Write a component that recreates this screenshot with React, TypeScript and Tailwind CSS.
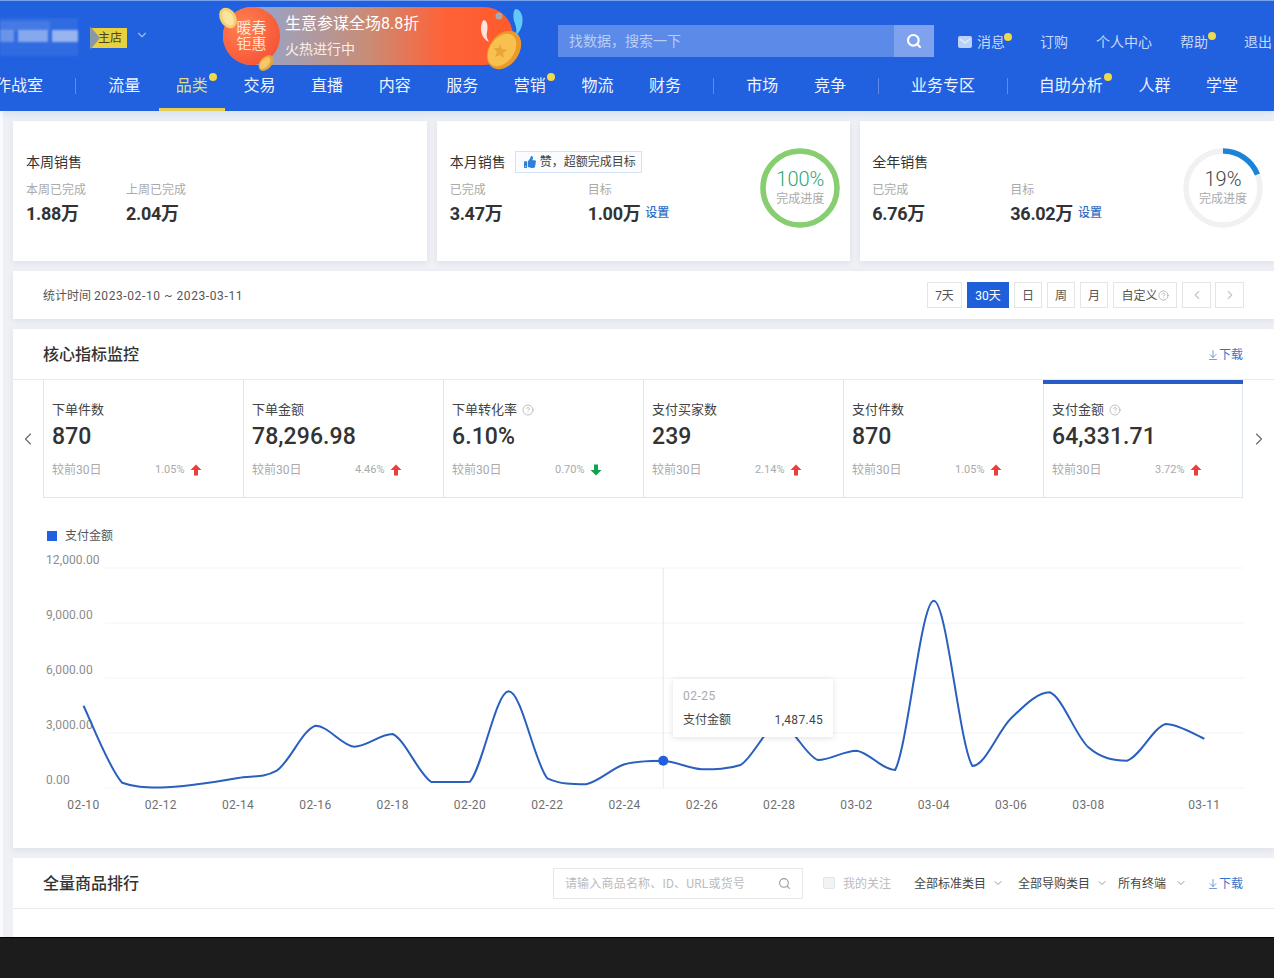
import { ArrowDownToLine, ChevronDown, ChevronLeft, ChevronRight, CircleHelp, Search } from "lucide-react";
import { FaThumbsUp } from "react-icons/fa";

const navA = ["流量", "品类", "交易", "直播", "内容", "服务", "营销", "物流", "财务"];
const navDots = ["品类", "营销", "自助分析"];

const metrics = [
  { title: "下单件数", value: "870", pct: "1.05%", up: true },
  { title: "下单金额", value: "78,296.98", pct: "4.46%", up: true },
  { title: "下单转化率", value: "6.10%", pct: "0.70%", up: false, help: true },
  { title: "支付买家数", value: "239", pct: "2.14%", up: true },
  { title: "支付件数", value: "870", pct: "1.05%", up: true },
  { title: "支付金额", value: "64,331.71", pct: "3.72%", up: true, help: true, active: true },
];

const ranges = [
  { label: "7天", w: "w-[35px]" },
  { label: "30天", w: "w-[42px]", active: true },
  { label: "日", w: "w-[28px]" },
  { label: "周", w: "w-[28px]" },
  { label: "月", w: "w-[28px]" },
];

// y pixel of each day, read from the picture
const ys = [
  705.7, 782.7, 787.5, 784, 778, 770.7, 725.7, 746.7, 734, 782, 781.7, 691.3, 778.3, 784.3, 764.3, 760.7, 769.3, 765, 724,
  760, 750.7, 770, 600.7, 766, 718.3, 692.3, 747.3, 760.7, 724, 738.7,
];
const dayX = (i: number) => 83.5 + i * 38.65;

const clamp = (v: number, a: number, b: number) => Math.min(Math.max(a, b), Math.max(Math.min(a, b), v));

const linePath = () => {
  const pts = ys.map((y, i) => [dayX(i), y]);
  let d = `M${pts[0][0]} ${pts[0][1]}`;
  for (let i = 0; i < pts.length - 1; i++) {
    const p0 = pts[Math.max(i - 1, 0)];
    const p1 = pts[i];
    const p2 = pts[i + 1];
    const p3 = pts[Math.min(i + 2, pts.length - 1)];
    const c1x = p1[0] + (p2[0] - p0[0]) / 6;
    const c1y = clamp(p1[1] + (p2[1] - p0[1]) / 6, p1[1], p2[1]);
    const c2x = p2[0] - (p3[0] - p1[0]) / 6;
    const c2y = clamp(p2[1] - (p3[1] - p1[1]) / 6, p1[1], p2[1]);
    d += ` C${c1x} ${c1y} ${c2x} ${c2y} ${p2[0]} ${p2[1]}`;
  }
  return d;
};

const xLabels = [
  { i: 0, t: "02-10" },
  { i: 2, t: "02-12" },
  { i: 4, t: "02-14" },
  { i: 6, t: "02-16" },
  { i: 8, t: "02-18" },
  { i: 10, t: "02-20" },
  { i: 12, t: "02-22" },
  { i: 14, t: "02-24" },
  { i: 16, t: "02-26" },
  { i: 18, t: "02-28" },
  { i: 20, t: "03-02" },
  { i: 22, t: "03-04" },
  { i: 24, t: "03-06" },
  { i: 26, t: "03-08" },
  { i: 29, t: "03-11" },
];

const yLabels = [
  { y: 568, t: "12,000.00" },
  { y: 623, t: "9,000.00" },
  { y: 678, t: "6,000.00" },
  { y: 733, t: "3,000.00" },
  { y: 788, t: "0.00" },
];

const Dot = ({ className }: { className: string }) => (
  <span className={`absolute h-[8px] w-[8px] rounded-full bg-[#eed84c] ${className}`} />
);

const NavItem = ({ label, active }: { label: string; active?: boolean }) => (
  <div className={`relative flex h-full items-center pb-[5px] ${active ? "text-[#dcdf86]" : "text-[#eef3ff]"}`}>
    {label}
    {navDots.includes(label) && <Dot className="-right-[9px] top-[8px]" />}
    {active && <span className="absolute -left-[17px] -right-[17px] bottom-0 h-[3px] bg-[#e6cf55]" />}
  </div>
);

const NavSep = ({ className = "-mx-[3.5px]" }: { className?: string }) => (
  <span className={`mb-[5px] h-[16px] w-px bg-[#5d8be6] ${className}`} />
);

const Download = () => (
  <span className="flex items-center pt-px text-[12px] text-[#3a74c9]">
    <ArrowDownToLine size={12} strokeWidth={1.4} />
    下载
  </span>
);

const Ring = ({ pct, color, textColor }: { pct: number; color: string; textColor: string }) => {
  const len = 2 * Math.PI * 37;
  return (
    <div className="relative flex h-[80px] w-[80px] shrink-0 flex-col items-center justify-center pb-[3px]">
      <svg className="absolute inset-0" width="80" height="80" viewBox="0 0 80 80">
        <circle cx="40" cy="40" r="37" fill="none" stroke="#f0f1f2" strokeWidth="5.5" />
        <circle
          cx="40"
          cy="40"
          r="37"
          fill="none"
          stroke={color}
          strokeWidth="5.5"
          strokeDasharray={`${(len * pct) / 100} ${len}`}
          transform="rotate(-90 40 40)"
        />
      </svg>
      <span className={`text-[20px] leading-[24px] font-light ${textColor}`}>{pct}%</span>
      <span className="text-[12px] leading-[16px] text-[#aaaaaa]">完成进度</span>
    </div>
  );
};

const Stat = ({ label, value, link, w }: { label: string; value: string; link?: boolean; w: string }) => (
  <div className={w}>
    <div className="h-[20px] text-[12px] leading-[22px] text-[#aaaaaa]">{label}</div>
    <div className="flex h-[28px] items-center text-[18px] font-bold tracking-[-0.3px] text-[#333333]">
      {value}
      {link && <span className="ml-[5px] text-[12px] font-medium tracking-normal text-[#2f6fc4]">设置</span>}
    </div>
  </div>
);

const UpArrow = () => (
  <svg width="12" height="12" viewBox="0 0 12 12">
    <path d="M6 .5 11.5 6H8v5.5H4V6H.5z" fill="#e5423d" />
  </svg>
);

const DownArrow = () => (
  <svg width="12" height="12" viewBox="0 0 12 12">
    <path d="M6 11.5.5 6H4V.5h4V6h3.5z" fill="#12a150" />
  </svg>
);

const App = () => {
  return (
    <div className="flex h-[978px] w-[1274px] flex-col overflow-hidden bg-[#eef0f5] font-[Roboto,'Noto_Sans_CJK_SC',sans-serif] text-[#333333]">
      {/* top bar */}
      <header className="relative z-10 h-[111px] shrink-0 border-t border-[#7aa3ee] bg-[#2160df] shadow-[0_3px_8px_rgba(33,96,223,0.12)]">
        <div className="flex h-[64px] items-start">
          <svg className="mt-[17px] shrink-0 blur-[1px]" width="90" height="38" viewBox="0 0 90 38">
            <rect x="0" y="0" width="78" height="38" fill="#fff" opacity=".07" />
            <rect x="0" y="3" width="50" height="10" fill="#fff" opacity=".1" />
            <rect x="0" y="12" width="14" height="12" fill="#fff" opacity=".28" />
            <rect x="18" y="12" width="30" height="12" fill="#fff" opacity=".42" />
            <rect x="52" y="12" width="26" height="12" fill="#fff" opacity=".5" />
          </svg>
          <div className="relative mt-[27px] flex h-[20px] w-[37px] shrink-0 items-center justify-end bg-[#e8d13f] pr-[5px] text-[12px] text-[#4a4220]">
            主店
            <svg className="absolute left-0 top-[-2px]" width="10" height="24" viewBox="0 0 10 24">
              <path d="M0 0 10 12 0 24z" fill="#6f8bc0" opacity=".8" />
            </svg>
          </div>
          <ChevronDown className="mt-[27px] ml-[8px] text-[#9fbdf5]" size={14} />
          {/* promo banner */}
          <div className="relative mt-[6px] ml-[74px] flex h-[58px] w-[290px] shrink-0 rounded-full bg-[linear-gradient(90deg,#9aa3c2_15%,#c98c76_50%,#ff6238_76%,#ff5a2c)]">
            <div className="flex h-[58px] w-[57px] shrink-0 flex-col items-center justify-center rounded-full bg-[radial-gradient(circle_at_35%_35%,#ff8254,#f5472c)] text-[15px] leading-[16px] text-[#ffe6d8]">
              <span>暖春</span>
              <span>钜惠</span>
            </div>
            <div className="ml-[5px] flex flex-col pt-[5px] text-white">
              <span className="text-[16px] leading-[24px]">生意参谋全场8.8折</span>
              <span className="mt-[3px] text-[14px] leading-[20px] text-[#fbeee8]">火热进行中</span>
            </div>
            <svg className="absolute -left-[13px] -top-[6px] overflow-visible" width="320" height="70" viewBox="210 0 320 70">
              <ellipse cx="228" cy="17" rx="8" ry="11" transform="rotate(-30 228 17)" fill="#f6cf70" />
              <ellipse cx="228" cy="17" rx="5" ry="8" transform="rotate(-30 228 17)" fill="#fbe3a0" />
              <ellipse cx="266" cy="62" rx="6" ry="9" transform="rotate(40 266 62)" fill="#e8a23a" />
              <ellipse cx="265" cy="62" rx="4" ry="7" transform="rotate(40 265 62)" fill="#f6c769" />
              <ellipse cx="504" cy="49" rx="15" ry="21" transform="rotate(35 504 49)" fill="#eb9a2a" />
              <ellipse cx="502" cy="49" rx="12" ry="18" transform="rotate(35 502 49)" fill="#f8c04f" />
              <path d="M500 43l2 5 5 1-4 3 1 5-4-3-5 2 2-5-3-4 5 0z" fill="#e8a53a" />
              <path d="M484 19c4 1 4 8 3 12-1 3 0 7 2 10-5-2-8-8-8-13 0-4 1-8 3-9z" fill="#ffe3dc" />
              <path d="M516 8c5 0 8 9 6 16-1 4-3 8-6 10 1-6 0-9-2-14-1-5-1-11 2-12z" fill="#63c9f6" />
              <circle cx="499" cy="15" r="3.5" fill="#a9a9a9" />
            </svg>
          </div>
          {/* search */}
          <div className="mt-[24px] ml-[45px] flex h-[32px] w-[376px] shrink-0 bg-[#5b8ae8]">
            <div className="flex-1 pl-[11px] text-[14px] leading-[32px] text-[#b9cdf6]">找数据，搜索一下</div>
            <div className="flex w-[40px] items-center justify-center bg-[#7ea2ee]">
              <Search className="text-white" size={16} strokeWidth={3.2} />
            </div>
          </div>
          {/* links */}
          <div className="mt-[24px] flex h-[34px] items-center whitespace-nowrap text-[14px] text-[#c8d9fa]">
            <svg className="ml-[24px]" width="14" height="12" viewBox="0 0 14 12">
              <rect width="14" height="12" rx="2" fill="#bcd0f8" />
              <path d="M2 3l5 4 5-4" fill="none" stroke="#e6eeff" strokeWidth="1.2" />
            </svg>
            <span className="relative ml-[5px]">
              消息
              <Dot className="-right-[7px] top-[1px]" />
            </span>
            <span className="ml-[35px]">订购</span>
            <span className="ml-[28px]">个人中心</span>
            <span className="relative ml-[28px]">
              帮助
              <Dot className="-right-[8px] top-[0px]" />
            </span>
            <span className="ml-[36px]">退出</span>
          </div>
        </div>
        <nav className="-ml-[5px] flex h-[46px] items-center gap-[35.6px] whitespace-nowrap text-[16px]">
          <NavItem label="作战室" />
          <NavSep />
          {navA.map((item) => (
            <NavItem key={item} label={item} active={item === "品类"} />
          ))}
          <NavSep />
          <NavItem label="市场" />
          <NavItem label="竞争" />
          <NavSep />
          <NavItem label="业务专区" />
          <NavSep className="-ml-[3.5px] -mr-[5px]" />
          <NavItem label="自助分析" />
          <NavItem label="人群" />
          <NavItem label="学堂" />
        </nav>
      </header>

      {/* page */}
      <main className="flex min-h-0 flex-1 flex-col gap-[10px] overflow-hidden border-l-[3px] border-[#fafbfe] pt-[10px] pl-[10px]">
        <div className="grid shrink-0 grid-cols-3 gap-[10px]">
          <div className="h-[140px] bg-white pt-[30px] pl-[13px] shadow-[0_2px_6px_rgba(30,50,90,0.08)]">
            <div className="flex h-[22px] items-center text-[14px]">本周销售</div>
            <div className="mt-[6px] flex">
              <Stat label="本周已完成" value="1.88万" w="w-[100px]" />
              <Stat label="上周已完成" value="2.04万" w="w-[100px]" />
            </div>
          </div>
          <div className="flex h-[140px] justify-between bg-white pt-[30px] pr-[10px] pl-[13px] shadow-[0_2px_6px_rgba(30,50,90,0.08)]">
            <div>
              <div className="flex h-[22px] items-center text-[14px]">
                本月销售
                <span className="ml-[9px] flex h-[22px] w-[127px] items-center gap-[4px] border border-[#d3e2f6] bg-[#fafcff] pl-[8px] text-[12px] text-[#444444]">
                  <FaThumbsUp className="text-[#2f80d8]" size={12} />
                  赞，超额完成目标
                </span>
              </div>
              <div className="mt-[6px] flex">
                <Stat label="已完成" value="3.47万" w="w-[138px]" />
                <Stat label="目标" value="1.00万" link w="w-[100px]" />
              </div>
            </div>
            <div className="-mt-[3px]">
              <Ring pct={100} color="#87ce70" textColor="text-[#2ba678]" />
            </div>
          </div>
          <div className="flex h-[140px] justify-between bg-white pt-[30px] pr-[11px] pl-[12px] shadow-[0_2px_6px_rgba(30,50,90,0.08)]">
            <div>
              <div className="flex h-[22px] items-center text-[14px]">全年销售</div>
              <div className="mt-[6px] flex">
                <Stat label="已完成" value="6.76万" w="w-[138px]" />
                <Stat label="目标" value="36.02万" link w="w-[120px]" />
              </div>
            </div>
            <div className="-mt-[3px]">
              <Ring pct={19} color="#1c84d8" textColor="text-[#444444]" />
            </div>
          </div>
        </div>

        {/* date bar */}
        <div className="flex h-[48px] shrink-0 items-center justify-between bg-white pr-[30px] pl-[30px] shadow-[0_2px_6px_rgba(30,50,90,0.08)]">
          <span className="pt-px text-[12px] text-[#555555]">
            统计时间 <span className="tracking-[0.6px]">2023-02-10 ~ 2023-03-11</span>
          </span>
          <div className="flex gap-[5px] text-[12px]">
            {ranges.map((r) => (
              <span
                key={r.label}
                className={`flex h-[26px] items-center justify-center border pt-px ${r.w} ${
                  r.active ? "border-[#1f5fd9] bg-[#1f5fd9] text-white" : "border-[#e3e5e8] text-[#555555]"
                }`}
              >
                {r.label}
              </span>
            ))}
            <span className="flex h-[26px] w-[64px] items-center justify-center border border-[#e3e5e8] pt-px text-[#555555]">
              自定义
              <CircleHelp className="text-[#999999]" size={11} strokeWidth={1.4} />
            </span>
            <span className="flex h-[26px] w-[29px] items-center justify-center border border-[#e3e5e8] text-[#c4c6ca]">
              <ChevronLeft size={14} />
            </span>
            <span className="-ml-[1px] flex h-[26px] w-[29px] items-center justify-center border border-[#e3e5e8] text-[#c4c6ca]">
              <ChevronRight size={14} />
            </span>
          </div>
        </div>

        {/* core metrics */}
        <section className="shrink-0 bg-white pb-[28px] shadow-[0_2px_6px_rgba(30,50,90,0.08)]">
          <div className="flex h-[51px] items-center justify-between border-b border-[#e8eaee] pr-[31px] pl-[30px]">
            <h2 className="pt-px text-[16px] font-medium text-[#333333]">核心指标监控</h2>
            <Download />
          </div>
          <div className="flex h-[118px]">
            <div className="flex w-[30px] items-center justify-center text-[#666666]">
              <ChevronLeft size={20} strokeWidth={1.3} />
            </div>
            <div className="flex w-[1200px] border-b border-l border-[#e2e6ea]">
              {metrics.map((m) => (
                <div
                  key={m.title}
                  className="relative w-[200px] border-r border-[#dde6ee] pt-[20px] pl-[8px] last:w-[199px]"
                >
                  {m.active && <span className="absolute -left-px -right-px top-0 h-[4px] bg-[#2a5cc8]" />}
                  <div className="flex h-[20px] items-center gap-[5px] text-[13px] text-[#444444]">
                    {m.title}
                    {m.help && <CircleHelp className="text-[#a5a5a5]" size={12} strokeWidth={1.4} />}
                  </div>
                  <div className="mt-[3px] h-[28px] text-[23px] leading-[28px] font-medium tracking-[0.1px] text-[#333333]">
                    {m.value}
                  </div>
                  <div className="mt-[9px] flex h-[20px] items-center text-[12px] text-[#aaaaaa]">
                    <span className="w-[103px]">较前30日</span>
                    <span className="w-[35px] text-[11px]">{m.pct}</span>
                    {m.up ? <UpArrow /> : <DownArrow />}
                  </div>
                </div>
              ))}
            </div>
            <div className="flex w-[31px] items-center justify-center text-[#666666]">
              <ChevronRight size={20} strokeWidth={1.3} />
            </div>
          </div>

          <div className="mt-[33px] ml-[34px] flex h-[10px] items-center gap-[8px] text-[12px] text-[#555555]">
            <span className="h-[10px] w-[10px] bg-[#2160df]" />
            支付金额
          </div>

          {/* chart */}
          <div className="relative mt-[4px] h-[275px] w-[1261px]">
            <svg className="block text-[12px]" width="1261" height="275" viewBox="13 545 1261 275">
              {yLabels.map((l) => (
                <g key={l.t}>
                  <line x1="105" x2="1243" y1={l.y} y2={l.y} stroke="#f1f3f6" />
                  <text x="46" y={l.y - 4} fill="#8c8c8c" className="tracking-[0.1px]">
                    {l.t}
                  </text>
                </g>
              ))}
              {xLabels.map((l) => (
                <text key={l.t} x={dayX(l.i)} y="809" textAnchor="middle" fill="#6f6f6f" className="tracking-[0.4px]">
                  {l.t}
                </text>
              ))}
              <line x1={dayX(15)} x2={dayX(15)} y1="568" y2="788" stroke="#e6e8ec" />
              <path d={linePath()} fill="none" stroke="#2a5fbe" strokeWidth="2" />
              <circle cx={dayX(15)} cy={ys[15]} r="5" fill="#1f5fe0" />
            </svg>
            <div className="absolute top-[134px] left-[660px] h-[58px] w-[160px] bg-white px-[10px] pt-[7px] text-[12px] shadow-[0_1px_6px_rgba(0,0,0,0.12)]">
              <div className="h-[20px] leading-[20px] tracking-[0.5px] text-[#aaaaaa]">02-25</div>
              <div className="mt-[4px] flex h-[20px] items-center justify-between text-[#444444]">
                <span>支付金额</span>
                <span className="tracking-[0.3px]">1,487.45</span>
              </div>
            </div>
          </div>
        </section>

        {/* ranking */}
        <section className="h-[100px] shrink-0 bg-white">
          <div className="flex h-[51px] items-center justify-between border-b border-[#e8eaee] pr-[31px] pl-[30px]">
            <h2 className="pt-px text-[16px] font-medium text-[#333333]">全量商品排行</h2>
            <div className="flex items-center text-[12px] text-[#444444]">
              <div className="flex h-[31px] w-[250px] items-center justify-between border border-[#e6e8eb] pt-px pr-[11px] pl-[11px] text-[#bbbbbb]">
                <span className="tracking-[0.2px]">请输入商品名称、ID、URL或货号</span>
                <Search className="text-[#9a9a9a]" size={13} />
              </div>
              <span className="ml-[20px] h-[12px] w-[12px] rounded-[2px] border border-[#e3e5e8] bg-[#f2f3f5]" />
              <span className="ml-[8px] pt-px text-[#bbbbbb]">我的关注</span>
              <span className="ml-[23px] pt-px">全部标准类目</span>
              <ChevronDown className="ml-[6px] text-[#999999]" size={12} />
              <span className="ml-[14px] pt-px">全部导购类目</span>
              <ChevronDown className="ml-[6px] text-[#999999]" size={12} />
              <span className="ml-[10px] pt-px">所有终端</span>
              <ChevronDown className="mr-[20px] ml-[9px] text-[#999999]" size={12} />
              <Download />
            </div>
          </div>
        </section>
      </main>

      <footer className="h-[41px] shrink-0 border-t border-black bg-[#1c1c1c]" />
    </div>
  );
};

export default App;
